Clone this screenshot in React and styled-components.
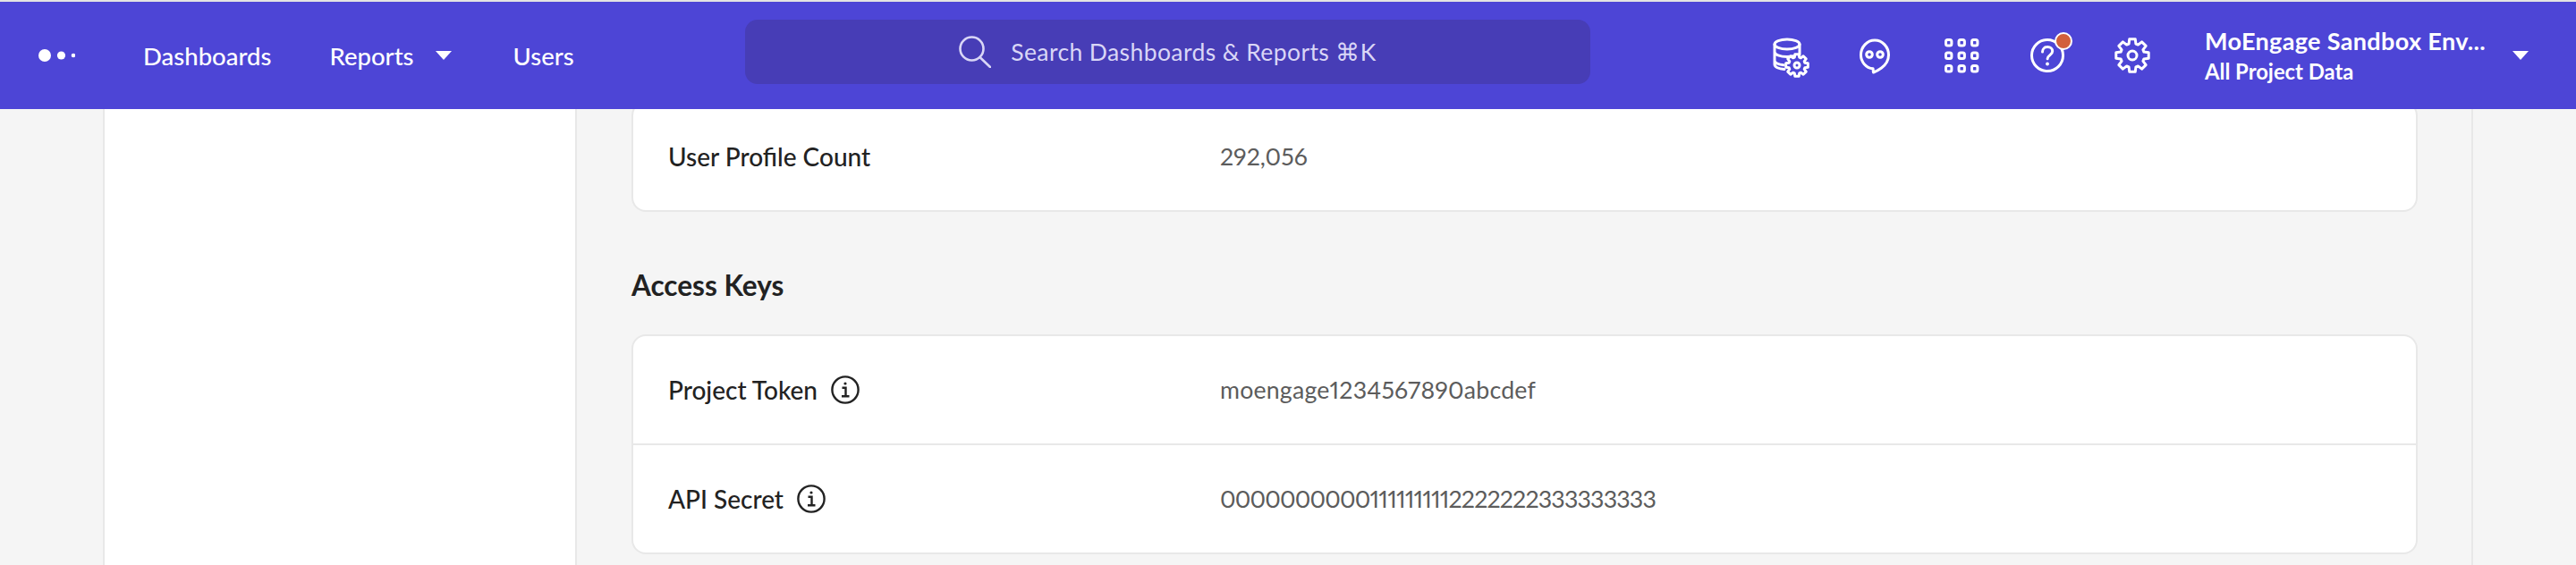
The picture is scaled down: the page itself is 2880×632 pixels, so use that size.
import React from "react";
import styled, { createGlobalStyle } from "styled-components";

const Global = createGlobalStyle`
  html, body { margin: 0; padding: 0; background: #f5f5f5; }
  body { font-family: Lato, "Open Sans", sans-serif; }
`;

const Page = styled.div`
  width: 2880px;
  height: 632px;
  overflow: hidden;
  display: flex;
  flex-direction: column;
  background: #f5f5f5;
`;

const Header = styled.header`
  height: 120px;
  flex: none;
  border-top: 2px solid #e3e3e3;
  background: #4d45d6;
  display: grid;
  grid-template-columns: 833px 945px 1fr;
  align-items: center;
  color: #fff;
`;

const LeftNav = styled.nav`
  display: flex;
  align-items: center;
  padding-left: 43px;
`;

const NavLink = styled.a`
  font-size: 27.5px;
  font-weight: 500;
  margin-left: ${(p) => p.$gap}px;
  display: flex;
  align-items: center;
  gap: 24px;
`;

const Caret = styled.span`
  display: block;
  width: 0;
  height: 0;
  border-left: 9px solid transparent;
  border-right: 9px solid transparent;
  border-top: 10px solid #fff;
`;

const Search = styled.div`
  height: 72px;
  align-self: start;
  margin-top: 20px;
  border-radius: 14px;
  background: #473db6;
  display: flex;
  align-items: center;
  justify-content: center;
  gap: 22px;
  color: #d9d6f6;
  font-size: 26.5px;
  letter-spacing: 0.4px;
`;

const RightNav = styled.div`
  display: flex;
  align-items: center;
  padding-left: 205px;
`;

const Icons = styled.div`
  display: flex;
  align-items: center;
  gap: 57.5px;
`;

const IconBox = styled.div`
  position: relative;
  width: 38px;
  height: 38px;
  svg { display: block; overflow: visible; }
`;

const Badge = styled.span`
  position: absolute;
  top: -7px;
  right: -9px;
  width: 16px;
  height: 16px;
  border: 2px solid #fff;
  border-radius: 50%;
  background: #d2603c;
`;

const Account = styled.div`
  margin-left: 62px;
  width: 362px;
  display: flex;
  align-items: center;
  justify-content: space-between;
`;

const AccountText = styled.div`
  display: flex;
  flex-direction: column;
  gap: 4px;
  white-space: nowrap;
`;

const AccountName = styled.div`
  font-size: 27px;
  font-weight: 700;
  letter-spacing: 0.35px;
  line-height: 32px;
`;

const AccountSub = styled.div`
  font-size: 23.8px;
  font-weight: 700;
  line-height: 28px;
`;

const Body = styled.div`
  flex: 1;
  min-height: 0;
  display: flex;
  padding-left: 115px;
`;

const Sidebar = styled.aside`
  width: 526px;
  flex: none;
  background: #fff;
  border-left: 2px solid #e8e8e8;
  border-right: 2px solid #e8e8e8;
`;

const Main = styled.main`
  width: 2120px;
  box-sizing: border-box;
  padding: 0 60px 0 61px;
  border-right: 2px solid #e8e8e8;
  overflow: hidden;
`;

const Card = styled.section`
  background: #fff;
  border: 2px solid #e8e8e8;
  border-radius: 16px;
  box-sizing: border-box;
  margin-top: ${(p) => p.$top || 0}px;
`;

const Row = styled.div`
  height: 120px;
  display: grid;
  grid-template-columns: 617px 1fr;
  align-items: center;
  padding-left: 39px;
  & + & { border-top: 2px solid #e8e8e8; }
`;

const Label = styled.div`
  font-size: 28px;
  font-weight: 500;
  color: #222;
  display: flex;
  align-items: center;
  gap: 15px;
`;

const Value = styled.div`
  font-size: 26.7px;
  color: #5c5c5c;
  font-variant-numeric: proportional-nums;
  font-feature-settings: "pnum";
  letter-spacing: ${(p) => p.$spacing || 0}px;
`;

const SectionTitle = styled.h2`
  margin: 64px 0 37px;
  font-size: 31.5px;
  line-height: 36px;
  font-weight: 700;
  color: #222;
`;

const line = { fill: "none", stroke: "#fff", strokeWidth: 3, strokeLinecap: "round", strokeLinejoin: "round" };

function gearPath(cx, cy, rOut, rIn, teeth) {
  const pts = [];
  const step = (Math.PI * 2) / teeth;
  for (let i = 0; i < teeth; i++) {
    const a = i * step - Math.PI / 2;
    [[-0.3, rIn], [-0.18, rOut], [0.18, rOut], [0.3, rIn]].forEach(([k, r]) => {
      pts.push(`${(cx + Math.cos(a + k * step * 1.25) * r).toFixed(2)} ${(cy + Math.sin(a + k * step * 1.25) * r).toFixed(2)}`);
    });
  }
  return "M" + pts.join("L") + "Z";
}

function Logo() {
  return (
    <svg width="41" height="14" viewBox="0 0 41 14" fill="#fff">
      <circle cx="7" cy="7" r="7" />
      <circle cx="25.5" cy="7" r="4.6" />
      <circle cx="39" cy="7" r="2.3" />
    </svg>
  );
}

function SearchIcon() {
  return (
    <svg width="36" height="36" viewBox="0 0 36 36" fill="none" stroke="#d9d6f6" strokeWidth="2.6" strokeLinecap="round">
      <circle cx="14.5" cy="14.5" r="13" />
      <path d="M23.5 24 35 35" />
    </svg>
  );
}

function DataIcon() {
  return (
    <svg width="38" height="38" viewBox="0 0 38 38">
      <ellipse cx="15" cy="6.5" rx="14" ry="5.5" {...line} />
      <path d="M1 6.5V29c0 3 4.5 5.2 11 5.5M29 6.5V18M1 15c0 3 6 5.5 14 5.5 2.500 0 4.600-.2 6.500-.7M1 24.500c0 2.600 4 4.600 10 5.300" {...line} />
      <path d={gearPath(26, 30, 12.5, 9.3, 8)} fill="#4d45d6" stroke="#fff" strokeWidth="3" strokeLinejoin="round" />
      <circle cx="26" cy="30" r="3" {...line} />
    </svg>
  );
}

function ChatIcon() {
  return (
    <svg width="34" height="38" viewBox="0 0 34 38">
      <path d="M15.500 38c-.3-1.500-.4-2.700-.4-4.200C7 33 1.500 26 1.500 18.500 1.500 9.500 8.500 2 17 2s15.500 7.500 15.500 16.500c0 7-4 11.500-8 14.500-2.700 2-5.500 3.700-9 5Z" {...line} />
      <circle cx="11" cy="18" r="3.300" {...line} />
      <circle cx="23" cy="18" r="3.300" {...line} />
    </svg>
  );
}

function GridIcon() {
  const cells = [];
  [0, 14.5, 29].forEach((y) =>
    [0, 14.5, 29].forEach((x) =>
      cells.push(<rect key={`${x}-${y}`} x={x + 1.5} y={y + 1.5} width="6.4" height="6.4" rx="2" {...line} />)
    )
  );
  return <svg width="38" height="38" viewBox="0 0 38 38">{cells}</svg>;
}

function HelpIcon() {
  return (
    <svg width="38" height="38" viewBox="0 0 38 38">
      <circle cx="19" cy="19" r="17.500" {...line} />
      <path d="M13.500 15c0-3.300 2.500-5.500 5.700-5.500s5.500 2 5.500 4.800c0 4.200-5.600 4.400-5.600 8.500" {...line} />
      <circle cx="19" cy="28.500" r="1.900" fill="#fff" />
    </svg>
  );
}

function GearIcon() {
  return (
    <svg width="38" height="38" viewBox="0 0 38 38">
      <path d={gearPath(19, 19, 18.500, 13.500, 8)} {...line} />
      <circle cx="19" cy="19" r="5" {...line} />
    </svg>
  );
}

function InfoIcon() {
  return (
    <svg width="32" height="32" viewBox="0 0 32 32" fill="none" stroke="#222" strokeWidth="2.4">
      <circle cx="16" cy="16" r="14.600" />
      <path d="M12.500 13.800H16.500V23M12 23.200H20.500" />
      <circle cx="16" cy="9" r="1.600" fill="#222" stroke="none" />
    </svg>
  );
}

export default function App() {
  return (
    <Page>
      <Global />
      <Header>
        <LeftNav>
          <Logo />
          <NavLink $gap={76}>Dashboards</NavLink>
          <NavLink $gap={65}>Reports <Caret /></NavLink>
          <NavLink $gap={69}>Users</NavLink>
        </LeftNav>
        <Search>
          <SearchIcon />
          <span>Search Dashboards &amp; Reports ⌘K</span>
        </Search>
        <RightNav>
          <Icons>
            <IconBox><DataIcon /></IconBox>
            <IconBox><ChatIcon /></IconBox>
            <IconBox><GridIcon /></IconBox>
            <IconBox><HelpIcon /><Badge /></IconBox>
            <IconBox><GearIcon /></IconBox>
          </Icons>
          <Account>
            <AccountText>
              <AccountName>MoEngage Sandbox Env...</AccountName>
              <AccountSub>All Project Data</AccountSub>
            </AccountText>
            <Caret />
          </Account>
        </RightNav>
      </Header>
      <Body>
        <Sidebar />
        <Main>
          <Card $top={-9}>
            <Row>
              <Label>User Profile Count</Label>
              <Value>292,056</Value>
            </Row>
          </Card>
          <SectionTitle>Access Keys</SectionTitle>
          <Card>
            <Row>
              <Label>Project Token <InfoIcon /></Label>
              <Value $spacing={0.2}>moengage1234567890abcdef</Value>
            </Row>
            <Row>
              <Label>API Secret <InfoIcon /></Label>
              <Value $spacing={-0.8}>00000000001111111112222222333333333</Value>
            </Row>
          </Card>
        </Main>
      </Body>
    </Page>
  );
}
